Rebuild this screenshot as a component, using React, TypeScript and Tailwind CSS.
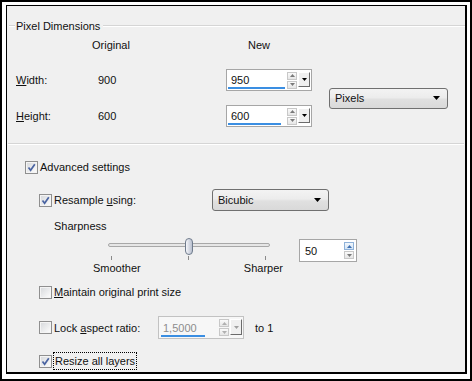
import type { ReactNode } from 'react'

// small filled triangle used by combo boxes and spin buttons
const Tri = ({ up = false, color = '#000', w = 7, h = 4 }: { up?: boolean; color?: string; w?: number; h?: number }) => (
  <svg width={w} height={h} viewBox={`0 0 ${w} ${h}`} className="block">
    <polygon points={up ? `0,${h} ${w},${h} ${w / 2},0` : `0,0 ${w},0 ${w / 2},${h}`} fill={color} />
  </svg>
)

const Checkbox = ({ checked = false }: { checked?: boolean }) => (
  <div className="w-[13px] h-[13px] shrink-0 border border-[#8f8f8f] bg-[#f4f4f4] p-[1px]">
    <div className="w-full h-full bg-gradient-to-br from-[#d9dbde] to-[#fbfbfb] flex items-center justify-center">
      {checked && (
        <svg width="9" height="9" viewBox="0 0 9 9">
          <path d="M1.5 4.5 L3.6 7.2 L7.8 1.2" fill="none" stroke="#4a64a2" strokeWidth="1.7" />
        </svg>
      )}
    </div>
  </div>
)

const CheckRow = ({ checked, children }: { checked?: boolean; children: ReactNode }) => (
  <div className="flex items-center gap-[2px]">
    <Checkbox checked={checked} />
    <span className="whitespace-nowrap">{children}</span>
  </div>
)

const SpinBtn = ({ up = false, active = false, disabled = false }: { up?: boolean; active?: boolean; disabled?: boolean }) => (
  <div
    className={
      active
        ? 'h-[8px] w-[10px] border border-[#8fb2d9] bg-gradient-to-b from-[#f2f7fc] to-[#d3e4f5] flex items-center justify-center'
        : 'h-[8px] w-[10px] border border-[#c8c8c8] bg-gradient-to-b from-[#fafafa] to-[#e6e6e6] flex items-center justify-center'
    }
  >
    <Tri up={up} w={5} h={3} color={active ? '#3f6fb0' : disabled ? '#b0b0b0' : '#7a7a7a'} />
  </div>
)

const DropBtn = ({ disabled = false }: { disabled?: boolean }) => (
  <div className="w-[12px] mt-[2px] mb-[3px] mr-[1px] border border-t-white border-l-white border-r-[#6b6b6b] border-b-[#6b6b6b] bg-[#f0f0f0] flex items-center justify-center">
    <Tri w={5} h={3} color={disabled ? '#a0a0a0' : '#000'} />
  </div>
)

const Combo = ({ label, className }: { label: string; className: string }) => (
  <div
    className={`${className} rounded-[3px] border border-[#707070] bg-[linear-gradient(#f3f3f3_0%,#ececec_45%,#e0e0e0_55%,#d9d9d9_100%)] flex items-center justify-between pl-[5px] pr-[7px]`}
  >
    <span>{label}</span>
    <Tri w={7} h={4} />
  </div>
)

const Separator = () => <div className="h-[2px] border-t border-b border-t-[#d5d5d5] border-b-white" />

export default function App() {
  return (
    <div className="w-[472px] h-[381px] bg-white border-2 border-black pt-[3px] pl-[4px] pr-[3px] pb-[5px] font-['Liberation_Sans',Arial,sans-serif] text-[11px] leading-[14px] text-[#111]">
      <div className="h-full border-t border-l border-r-2 border-b-2 border-black bg-[#f0f0f0]">
        {/* Pixel Dimensions */}
        <div className="mt-[13px] h-[14px] flex items-center">
          <div className="ml-[2px] w-[6px]">
            <Separator />
          </div>
          <span className="ml-[1px] mr-[3px]">Pixel Dimensions</span>
          <div className="flex-1">
            <Separator />
          </div>
        </div>

        <div className="pl-[9px]">
          <div className="mt-[5px] h-[14px] flex">
            <div className="w-[76px]" />
            <div className="w-[156px]">Original</div>
            <div>New</div>
          </div>

          <div className="mt-[17px] flex">
            <div className="flex flex-col gap-[14px]">
              <div className="h-[22px] flex items-center">
                <div className="w-[82px]">
                  <u>W</u>idth:
                </div>
                <div className="w-[128px]">900</div>
                <div className="w-[86px] h-[22px] flex border border-[#a6a6a6] bg-white">
                  <div className="flex-1 flex flex-col pl-[4px] pt-[3px]">
                    <span>950</span>
                    <div className="mt-auto mb-[1px] -ml-[3px] w-[57px] h-[3px] bg-[#3a8ee2]" />
                  </div>
                  <div className="flex flex-col justify-center gap-[1px] mr-[1px]">
                    <SpinBtn up />
                    <SpinBtn />
                  </div>
                  <DropBtn />
                </div>
              </div>
              <div className="h-[22px] flex items-center">
                <div className="w-[82px]">
                  <u>H</u>eight:
                </div>
                <div className="w-[128px]">600</div>
                <div className="w-[86px] h-[22px] flex border border-[#a6a6a6] bg-white">
                  <div className="flex-1 flex flex-col pl-[4px] pt-[3px]">
                    <span>600</span>
                    <div className="mt-auto mb-[1px] -ml-[3px] w-[53px] h-[3px] bg-[#3a8ee2]" />
                  </div>
                  <div className="flex flex-col justify-center gap-[1px] mr-[1px]">
                    <SpinBtn up />
                    <SpinBtn />
                  </div>
                  <DropBtn />
                </div>
              </div>
            </div>
            <div className="ml-[17px] flex items-center">
              <Combo label="Pixels" className="w-[119px] h-[21px]" />
            </div>
          </div>
        </div>

        <div className="mt-[16px] mx-[1px]">
          <Separator />
        </div>

        {/* Advanced settings */}
        <div className="mt-[15px] pl-[18px] h-[14px] flex items-center">
          <CheckRow checked>Advanced settings</CheckRow>
        </div>

        <div className="pl-[32px]">
          <div className="mt-[15px] h-[22px] flex items-center">
            <div className="w-[173px]">
              <CheckRow checked>
                Resample <u>u</u>sing:
              </CheckRow>
            </div>
            <Combo label="Bicubic" className="w-[117px] h-[22px]" />
          </div>

          <div className="mt-[8px] h-[14px] pl-[15px]">Sharpness</div>

          <div className="mt-[4px] flex items-start">
            <div className="ml-[54px] w-[190px]">
              <div className="relative h-[24px]">
                <div className="absolute left-[15px] right-[13px] top-[6px] h-[4px] rounded-full border border-[#a8a8a8] bg-[#e6e6e6]" />
                <div className="absolute left-[92px] top-[1px] w-[8px] h-[17px] rounded-full border border-[#6f7b8c] bg-gradient-to-r from-[#f5f6fa] to-[#b9c0cf]" />
                <div className="absolute left-[18px] top-[19px] w-[1px] h-[4px] bg-[#8a8a8a]" />
                <div className="absolute left-[95px] top-[19px] w-[1px] h-[4px] bg-[#8a8a8a]" />
                <div className="absolute left-[172px] top-[19px] w-[1px] h-[4px] bg-[#8a8a8a]" />
              </div>
              <div className="h-[14px] flex justify-between">
                <span>Smoother</span>
                <span>Sharper</span>
              </div>
            </div>
            <div className="ml-[16px] mt-[2px] w-[58px] h-[23px] flex border border-[#a6a6a6] bg-white">
              <div className="flex-1 pl-[5px] pt-[4px]">50</div>
              <div className="flex flex-col justify-center gap-[1px] mr-[2px]">
                <SpinBtn up active />
                <SpinBtn />
              </div>
            </div>
          </div>

          <div className="mt-[10px] h-[14px] flex items-center">
            <CheckRow>
              <u>M</u>aintain original print size
            </CheckRow>
          </div>

          <div className="mt-[17px] h-[23px] flex items-center">
            <div className="w-[119px]">
              <CheckRow>
                Lock <u>a</u>spect ratio:
              </CheckRow>
            </div>
            <div className="w-[86px] h-[23px] flex border border-[#c2c2c2] bg-[#f7f7f7]">
              <div className="flex-1 flex flex-col pl-[4px] pt-[4px] text-[#8d8d8d]">
                <span>1,5000</span>
                <div className="mt-auto mb-[1px] -ml-[2px] w-[44px] h-[3px] bg-[#3a8ee2]" />
              </div>
              <div className="flex flex-col justify-center gap-[1px] mr-[1px]">
                <SpinBtn up disabled />
                <SpinBtn disabled />
              </div>
              <DropBtn disabled />
            </div>
            <span className="ml-[11px]">to 1</span>
          </div>

          <div className="mt-[15px] h-[14px] flex items-center">
            <div className="flex items-center gap-[1px]">
              <Checkbox checked />
              <span className="border border-dotted border-black px-[1px] leading-[16px]">Resize all layers</span>
            </div>
          </div>
        </div>
      </div>
    </div>
  )
}
